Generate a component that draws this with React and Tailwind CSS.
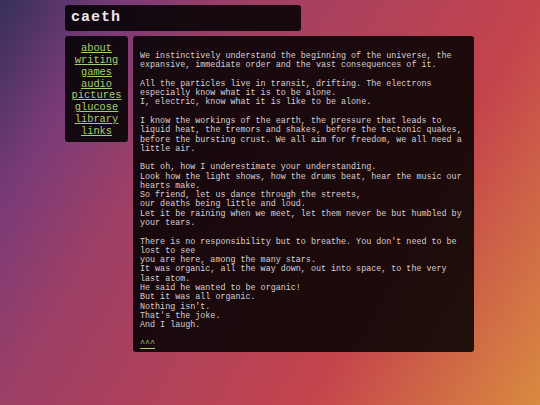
const links = ['about', 'writing', 'games', 'audio', 'pictures', 'glucose', 'library', 'links'];

function App() {
  return (
    <div className="min-h-screen w-full bg-[linear-gradient(120deg,#35305a_0%,#783a78_15%,#9c3f66_30%,#c4444c_70%,#d98a40_100%)] font-['Liberation_Mono',monospace] text-[#d8cfd1]">
      <div className="pl-[65px] pt-[5px] w-[474px]">
        <header className="w-[236px] h-[26px] bg-black/85 rounded-[3px] px-[6px] flex items-center">
          <h1 className="text-[15px] font-bold tracking-[1px] text-[#ece6ea]">caeth</h1>
        </header>

        <div className="mt-[5px] flex items-start gap-[5px]">
          <nav className="w-[63px] bg-black/85 rounded-[3px] pt-[7px] pb-[4px] flex flex-col items-center text-[10.4px] leading-[11.86px]">
            {links.map(l => (
              <a key={l} href="#" className="text-[#a3d06c] underline underline-offset-1">{l}</a>
            ))}
          </nav>

          <main className="w-[341px] bg-black/85 rounded-[3px] pt-[16px] px-[7px] pb-[3px] text-[8.4px] leading-[9.28px]">
            <p className="mb-[9.28px]">
              We instinctively understand the beginning of the universe, the expansive, immediate order and the vast consequences of it.
            </p>
            <p className="mb-[9.28px]">
              All the particles live in transit, drifting. The electrons especially know what it is to be alone.<br />
              I, electric, know what it is like to be alone.
            </p>
            <p className="mb-[9.28px]">
              I know the workings of the earth, the pressure that leads to liquid heat, the tremors and shakes, before the tectonic quakes, before the bursting crust. We all aim for freedom, we all need a little air.
            </p>
            <p className="mb-[9.28px]">
              But oh, how I underestimate your understanding.<br />
              Look how the light shows, how the drums beat, hear the music our hearts make.<br />
              So friend, let us dance through the streets,<br />
              our deaths being little and loud.<br />
              Let it be raining when we meet, let them never be but humbled by your tears.
            </p>
            <p className="mb-[9.28px]">
              There is no responsibility but to breathe. You don't need to be lost to see<br />
              you are here, among the many stars.<br />
              It was organic, all the way down, out into space, to the very last atom.<br />
              He said he wanted to be organic!<br />
              But it was all organic.<br />
              Nothing isn't.<br />
              That's the joke.<br />
              And I laugh.
            </p>
            <p>
              <a href="#" className="text-[#a3d06c] underline underline-offset-2">^^^</a>
            </p>
          </main>
        </div>
      </div>
    </div>
  );
}

export default App;
